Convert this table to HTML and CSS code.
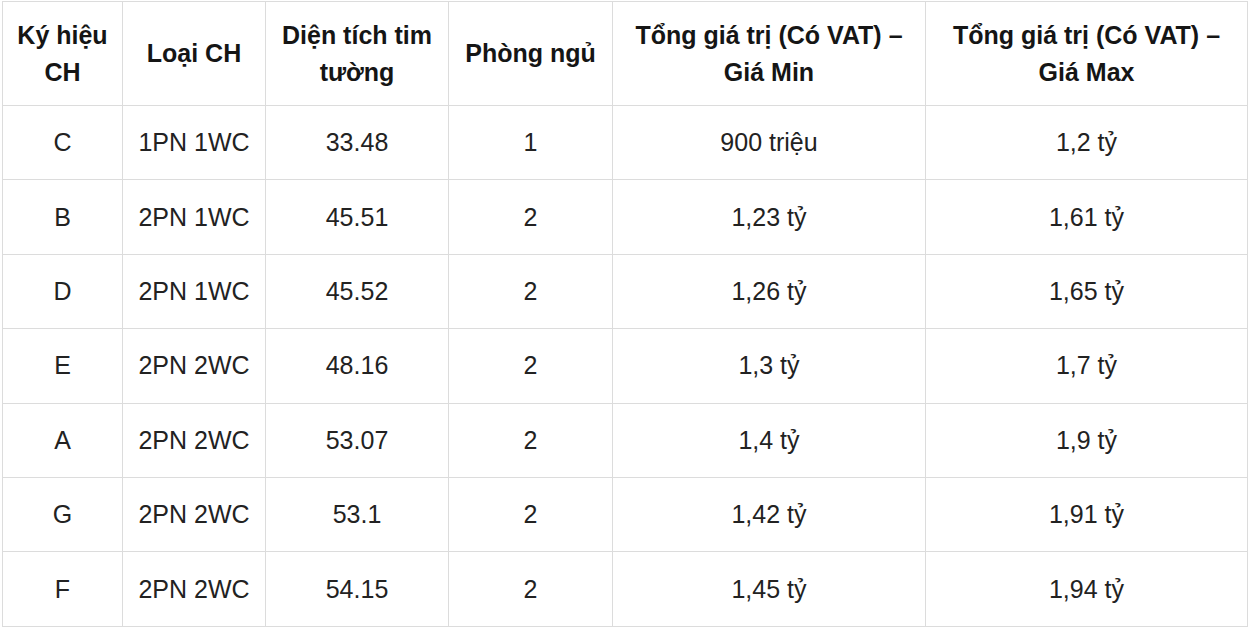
FILE: index.html
```html
<!DOCTYPE html>
<html lang="vi">
<head>
<meta charset="utf-8">
<title>Bảng giá căn hộ</title>
<link rel="stylesheet" href="styles.css">
</head>
<body>
<div class="wrap">
<table class="price-table">
  <colgroup>
    <col class="c1"><col class="c2"><col class="c3"><col class="c4"><col class="c5"><col class="c6">
  </colgroup>
  <thead>
    <tr>
      <th>Ký hiệu CH</th>
      <th>Loại CH</th>
      <th>Diện tích tim tường</th>
      <th>Phòng ngủ</th>
      <th>Tổng giá trị (Có VAT) – Giá Min</th>
      <th>Tổng giá trị (Có VAT) – Giá Max</th>
    </tr>
  </thead>
  <tbody>
    <tr><td>C</td><td>1PN 1WC</td><td>33.48</td><td>1</td><td>900 triệu</td><td>1,2 tỷ</td></tr>
    <tr><td>B</td><td>2PN 1WC</td><td>45.51</td><td>2</td><td>1,23 tỷ</td><td>1,61 tỷ</td></tr>
    <tr><td>D</td><td>2PN 1WC</td><td>45.52</td><td>2</td><td>1,26 tỷ</td><td>1,65 tỷ</td></tr>
    <tr><td>E</td><td>2PN 2WC</td><td>48.16</td><td>2</td><td>1,3 tỷ</td><td>1,7 tỷ</td></tr>
    <tr><td>A</td><td>2PN 2WC</td><td>53.07</td><td>2</td><td>1,4 tỷ</td><td>1,9 tỷ</td></tr>
    <tr><td>G</td><td>2PN 2WC</td><td>53.1</td><td>2</td><td>1,42 tỷ</td><td>1,91 tỷ</td></tr>
    <tr><td>F</td><td>2PN 2WC</td><td>54.15</td><td>2</td><td>1,45 tỷ</td><td>1,94 tỷ</td></tr>
  </tbody>
</table>
</div>
</body>
</html>
```
FILE: styles.css
```css
html, body {
  margin: 0;
  padding: 0;
  background: #ffffff;
}
.wrap {
  padding: 0 0 0 2px;
}
.price-table {
  width: 1246px;
  table-layout: fixed;
  border-collapse: collapse;
  font-family: "Liberation Sans", Arial, sans-serif;
  font-size: 25px;
  line-height: 1.47;
  color: #222222;
  margin-top: 1px;
}
.c1 { width: 120px; }
.c2 { width: 143px; }
.c3 { width: 183px; }
.c4 { width: 164px; }
.c5 { width: 313px; }
.c6 { width: 322px; }
.price-table th,
.price-table td {
  border: 1px solid #dcdcdc;
  text-align: center;
  vertical-align: middle;
  padding: 0 12px;
}
.price-table th {
  height: 103px;
  font-weight: bold;
  color: #151515;
}
.price-table td {
  height: 73.4px;
}
```
